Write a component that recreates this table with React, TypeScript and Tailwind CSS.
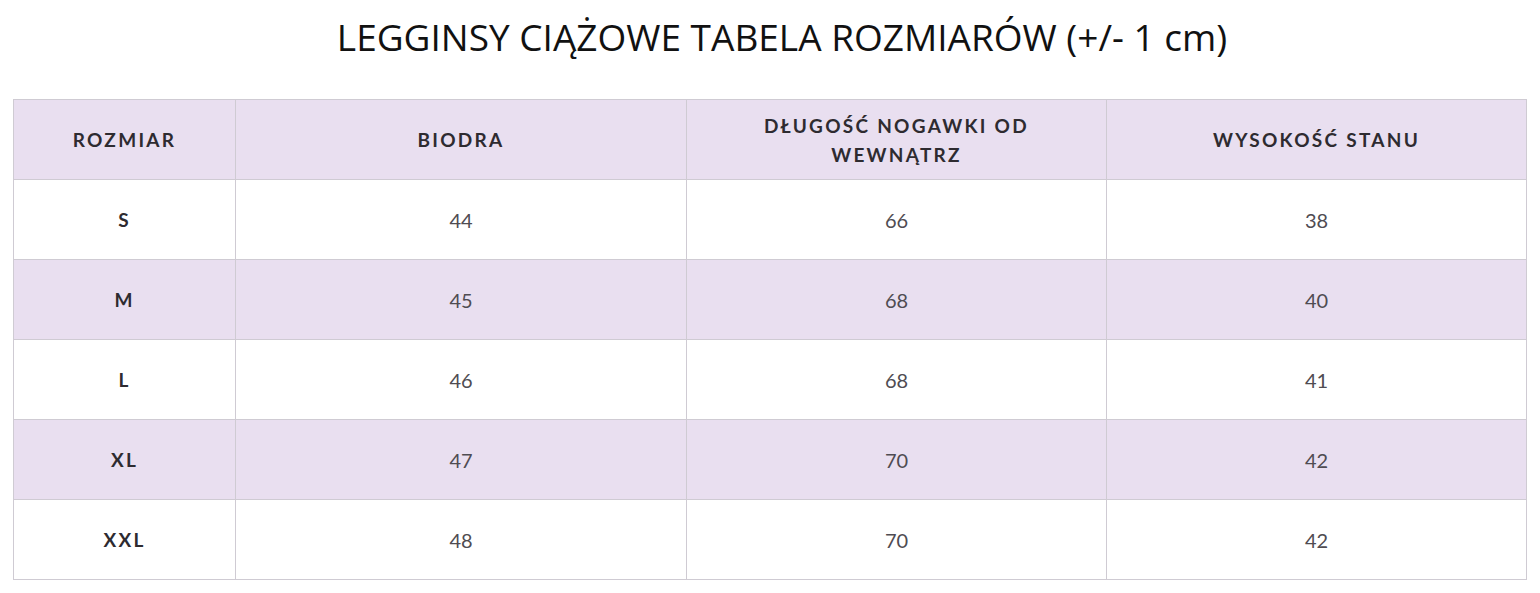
import React from 'react';

type Row = { size: string; hips: string; leg: string; rise: string };

const rows: Row[] = [
  { size: 'S', hips: '44', leg: '66', rise: '38' },
  { size: 'M', hips: '45', leg: '68', rise: '40' },
  { size: 'L', hips: '46', leg: '68', rise: '41' },
  { size: 'XL', hips: '47', leg: '70', rise: '42' },
  { size: 'XXL', hips: '48', leg: '70', rise: '42' },
];

const headCell =
  'border border-[#cfcbd3] px-4 text-center align-middle text-[19px] font-bold tracking-[0.12em] text-[#2e2b30] leading-[29px] font-["Lato",sans-serif]';
const bodyCell =
  'border border-[#cfcbd3] text-center align-middle text-[20px] text-[#4f4c52] font-["Lato",sans-serif]';

export default function App() {
  return (
    <div className="bg-white min-h-[593px] w-full">
      <h1 className="pt-[12px] pl-6 text-center text-[37px] leading-[50px] text-[#111] font-['Open_Sans',sans-serif]">
        LEGGINSY CIĄŻOWE TABELA ROZMIARÓW (+/- 1 cm)
      </h1>
      <div className="px-[13px] pt-[37px]">
        <table className="w-full table-fixed border-collapse">
          <colgroup>
            <col className="w-[222px]" />
            <col className="w-[451px]" />
            <col className="w-[420px]" />
            <col />
          </colgroup>
          <thead>
            <tr className="h-[80px] bg-[#e9dff0]">
              <th className={headCell}>ROZMIAR</th>
              <th className={headCell}>BIODRA</th>
              <th className={headCell}>
                DŁUGOŚĆ NOGAWKI OD
                <br />
                WEWNĄTRZ
              </th>
              <th className={headCell}>WYSOKOŚĆ STANU</th>
            </tr>
          </thead>
          <tbody>
            {rows.map((r, i) => (
              <tr key={r.size} className={i % 2 === 1 ? 'h-[80px] bg-[#e9dff0]' : 'h-[80px] bg-white'}>
                <td className={headCell}>{r.size}</td>
                <td className={bodyCell}>{r.hips}</td>
                <td className={bodyCell}>{r.leg}</td>
                <td className={bodyCell}>{r.rise}</td>
              </tr>
            ))}
          </tbody>
        </table>
      </div>
    </div>
  );
}
